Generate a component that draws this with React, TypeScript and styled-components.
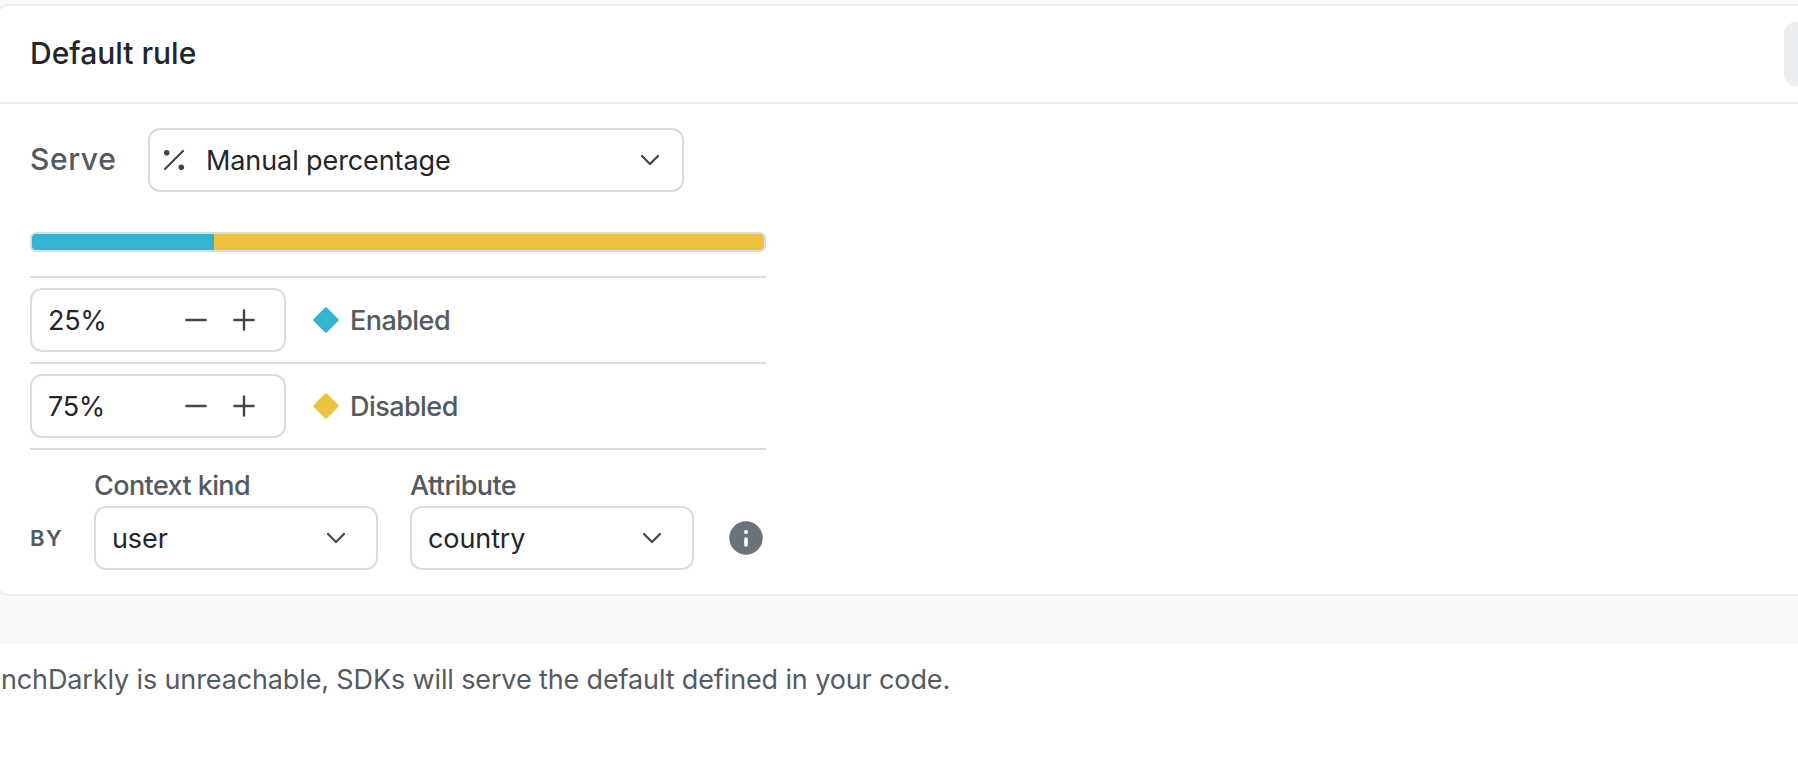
import React, { useState } from 'react';
import styled, { createGlobalStyle } from 'styled-components';

const color = {
  text: '#23252a',
  textSubtle: '#545a62',
  icon: '#3f454c',
  iconMuted: '#6c727a',
  border: '#d8dde3',
  borderSubtle: '#ebeef1',
  surface: '#f7f9fb',
  teal: '#34b4d0',
  yellow: '#edc23f',
};

const GlobalStyle = createGlobalStyle`
  * {
    box-sizing: border-box;
  }
  body {
    margin: 0;
    background: #fff;
    overflow: hidden;
    font-family: Inter, 'Liberation Sans', sans-serif;
    color: ${color.text};
  }
  button {
    font: inherit;
    color: inherit;
    cursor: pointer;
  }
`;

const Page = styled.main`
  width: 100vw;
  height: 758px;
  overflow: hidden;
`;

const Surface = styled.div`
  height: 644px;
  padding-top: 4px;
  background: ${color.surface};
`;

const Card = styled.section`
  width: 1920px;
  height: 592px;
  margin-left: -4px;
  border: 2px solid ${color.borderSubtle};
  border-radius: 12px;
  background: #fff;
`;

const CardHeader = styled.header`
  display: flex;
  align-items: center;
  justify-content: space-between;
  height: 98px;
  padding: 0 32px;
  border-bottom: 2px solid ${color.borderSubtle};
`;

const Title = styled.h2`
  margin: 0;
  padding-bottom: 2px;
  font-size: 30px;
  font-weight: 500;
  line-height: 40px;
`;

const HeaderButton = styled.button`
  width: 98px;
  height: 64px;
  border: 0;
  border-radius: 12px;
  background: ${color.borderSubtle};
`;

const CardBody = styled.div`
  width: 800px;
  padding: 24px 32px 0;
`;

const ServeRow = styled.div`
  display: flex;
  align-items: center;
`;

const ServeLabel = styled.span`
  width: 118px;
  padding-bottom: 2px;
  font-size: 30px;
  font-weight: 500;
  letter-spacing: 0.6px;
  color: ${color.textSubtle};
`;

const SelectButton = styled.button<{ $width: number; $pad: number }>`
  display: flex;
  align-items: center;
  width: ${({ $width }) => $width}px;
  height: 64px;
  padding: 0 ${({ $pad }) => $pad}px 0 16px;
  border: 2px solid ${color.border};
  border-radius: 12px;
  background: #fff;
  font-size: 27px;
  letter-spacing: -0.1px;
  text-align: left;
  .value {
    flex: 1;
  }
  .percent {
    margin: 0 21px 0 -3px;
  }
`;

const Bar = styled.div`
  display: flex;
  height: 20px;
  margin-top: 40px;
  border: 2px solid ${color.border};
  border-radius: 6px;
  overflow: hidden;
`;

const Segment = styled.div<{ $color: string }>`
  background: ${({ $color }) => $color};
  &:last-child {
    flex: 1;
  }
`;

const VariationList = styled.ul`
  margin: 24px 0 0;
  padding: 0;
  list-style: none;
  border-top: 2px solid ${color.border};
`;

const VariationRow = styled.li`
  display: flex;
  align-items: center;
  height: 86px;
  border-bottom: 2px solid ${color.border};
`;

const Stepper = styled.div`
  display: flex;
  align-items: center;
  width: 256px;
  height: 64px;
  padding: 0 16px;
  border: 2px solid ${color.border};
  border-radius: 12px;
  font-size: 27px;
  letter-spacing: -0.3px;
  .amount {
    flex: 1;
  }
`;

const StepButton = styled.button`
  display: flex;
  align-items: center;
  justify-content: center;
  width: 48px;
  height: 48px;
  padding: 0;
  border: 0;
  background: none;
`;

const VariationName = styled.span`
  display: flex;
  align-items: center;
  gap: 10px;
  margin-left: 26px;
  font-size: 27px;
  font-weight: 500;
  letter-spacing: -0.55px;
  color: ${color.textSubtle};
`;

const RolloutRow = styled.div`
  display: flex;
  align-items: flex-end;
  margin-top: 20px;
`;

const By = styled.span`
  width: 64px;
  font-size: 22px;
  font-weight: 600;
  line-height: 64px;
  letter-spacing: 1.6px;
  color: ${color.textSubtle};
`;

const Field = styled.div`
  margin-right: 32px;
`;

const FieldLabel = styled.div`
  height: 36px;
  font-size: 27px;
  font-weight: 500;
  line-height: 32px;
  letter-spacing: -0.6px;
  color: ${color.textSubtle};
`;

const InfoWrapper = styled.div`
  display: flex;
  align-items: center;
  height: 64px;
  margin-left: 3px;
`;

const Footnote = styled.p`
  margin: 0;
  padding: 19px 0 0 1px;
  font-size: 27px;
  line-height: 34px;
  letter-spacing: -0.13px;
  white-space: nowrap;
  color: ${color.textSubtle};
`;

const Chevron = () => (
  <svg width="20" height="12" viewBox="0 0 20 12" fill="none">
    <path
      d="M2 2l8 8 8-8"
      stroke={color.icon}
      strokeWidth="2.2"
      strokeLinecap="round"
      strokeLinejoin="round"
    />
  </svg>
);

const Percent = () => (
  <svg className="percent" width="22" height="22" viewBox="0 0 22 22" fill="none">
    <path d="M2 20L20 2" stroke={color.icon} strokeWidth="2.2" strokeLinecap="round" />
    <circle cx="3.7" cy="3.7" r="2.8" fill={color.icon} />
    <circle cx="18.3" cy="18.3" r="2.8" fill={color.icon} />
  </svg>
);

const Minus = () => (
  <svg width="24" height="24" viewBox="0 0 24 24" fill="none">
    <path d="M2.4 12h19.2" stroke={color.icon} strokeWidth="2.4" strokeLinecap="round" />
  </svg>
);

const Plus = () => (
  <svg width="24" height="24" viewBox="0 0 24 24" fill="none">
    <path
      d="M2.4 12h19.2M12 2.4v19.2"
      stroke={color.icon}
      strokeWidth="2.4"
      strokeLinecap="round"
    />
  </svg>
);

const Diamond = ({ fill }: { fill: string }) => (
  <svg width="28" height="28" viewBox="0 0 28 28">
    <rect x="4.6" y="4.6" width="18.8" height="18.8" rx="1.2" transform="rotate(45 14 14)" fill={fill} />
  </svg>
);

const Info = () => (
  <svg width="34" height="34" viewBox="0 0 34 34">
    <circle cx="17" cy="17" r="16.7" fill={color.iconMuted} />
    <circle cx="17" cy="11" r="2.1" fill="#fff" />
    <path d="M17 18v6" stroke="#fff" strokeWidth="3.6" strokeLinecap="round" />
  </svg>
);

interface SelectProps {
  value: string;
  width: number;
  pad: number;
  icon?: React.ReactNode;
}

const Select = ({ value, width, pad, icon }: SelectProps) => (
  <SelectButton type="button" $width={width} $pad={pad}>
    {icon}
    <span className="value">{value}</span>
    <Chevron />
  </SelectButton>
);

const App = () => {
  const [enabled, setEnabled] = useState(25);

  const handleStep = (step: number) => {
    setEnabled(Math.min(100, Math.max(0, enabled + step)));
  };

  const variations = [
    { name: 'Enabled', value: enabled, fill: color.teal, sign: 1 },
    { name: 'Disabled', value: 100 - enabled, fill: color.yellow, sign: -1 },
  ];

  return (
    <Page>
      <GlobalStyle />
      <Surface>
        <Card>
          <CardHeader>
            <Title>Default rule</Title>
            <HeaderButton type="button" />
          </CardHeader>
          <CardBody>
            <ServeRow>
              <ServeLabel>Serve</ServeLabel>
              <Select value="Manual percentage" width={536} pad={22} icon={<Percent />} />
            </ServeRow>
            <Bar>
              {variations.map(({ name, value, fill }) => (
                <Segment key={name} $color={fill} style={{ width: `calc(${value}% - 1px)` }} />
              ))}
            </Bar>
            <VariationList>
              {variations.map(({ name, value, fill, sign }) => (
                <VariationRow key={name}>
                  <Stepper>
                    <span className="amount">{value}%</span>
                    <StepButton type="button" onClick={() => handleStep(-sign)}>
                      <Minus />
                    </StepButton>
                    <StepButton type="button" onClick={() => handleStep(sign)}>
                      <Plus />
                    </StepButton>
                  </Stepper>
                  <VariationName>
                    <Diamond fill={fill} />
                    {name}
                  </VariationName>
                </VariationRow>
              ))}
            </VariationList>
            <RolloutRow>
              <By>BY</By>
              <Field>
                <FieldLabel>Context kind</FieldLabel>
                <Select value="user" width={284} pad={30} />
              </Field>
              <Field>
                <FieldLabel>Attribute</FieldLabel>
                <Select value="country" width={284} pad={30} />
              </Field>
              <InfoWrapper>
                <Info />
              </InfoWrapper>
            </RolloutRow>
          </CardBody>
        </Card>
      </Surface>
      <Footnote>nchDarkly is unreachable, SDKs will serve the default defined in your code.</Footnote>
    </Page>
  );
};

export default App;
